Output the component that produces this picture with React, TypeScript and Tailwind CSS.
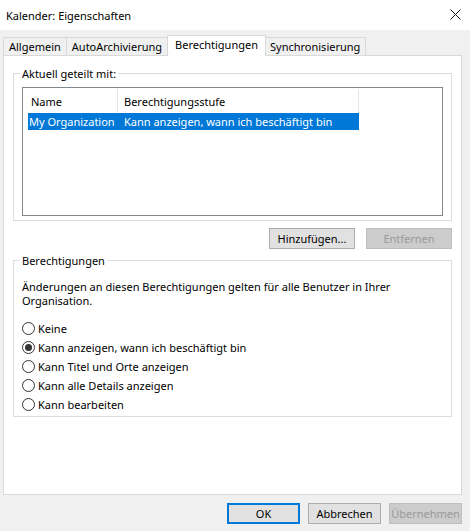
import React from "react";

const font = { fontFamily: '"Noto Sans", "DejaVu Sans", sans-serif' };

function Tab({ label, active, first }: { label: string; active?: boolean; first?: boolean }) {
  if (active) {
    return (
      <div className="relative z-10 -mx-[1px] -mb-px flex h-[21px] items-center self-end border border-b-0 border-[#d9d9d9] bg-white px-[7px]">
        <span className="-mt-[3px]">{label}</span>
      </div>
    );
  }
  return (
    <div
      className={`flex h-[18px] items-center self-end border border-b-0 border-[#d9d9d9] bg-[#f0f0f0] px-[5px] ${
        first ? "" : "border-l-0"
      }`}
    >
      {label}
    </div>
  );
}

function Radio({ label, checked }: { label: string; checked?: boolean }) {
  return (
    <div className="flex h-[19px] items-center">
      <div className="flex h-[13px] w-[13px] items-center justify-center rounded-full border border-[#333333] bg-white">
        {checked && <div className="h-[7px] w-[7px] rounded-full bg-[#333333]" />}
      </div>
      <span className="ml-[3px]">{label}</span>
    </div>
  );
}

function Button({
  label,
  disabled,
  primary,
  className = "",
}: {
  label: string;
  disabled?: boolean;
  primary?: boolean;
  className?: string;
}) {
  const base = "flex items-center justify-center h-[21px]";
  if (disabled) {
    return (
      <div className={`${base} border border-[#bfbfbf] bg-[#cccccc] text-[#9a9a9a] ${className}`}>{label}</div>
    );
  }
  if (primary) {
    return (
      <div className={`${base} border-2 border-[#0078d7] bg-[#e1e1e1] text-black ${className}`}>{label}</div>
    );
  }
  return <div className={`${base} border border-[#adadad] bg-[#e1e1e1] text-black ${className}`}>{label}</div>;
}

export default function App() {
  return (
    <div
      className="flex h-[531px] w-[470px] flex-col bg-[#f0f0f0] text-[11px] leading-[15px] text-black"
      style={font}
    >
      {/* Title bar */}
      <div className="flex h-[30px] shrink-0 items-center justify-between bg-white pl-[6px] pr-[9px]">
        <span className="text-[11px]">Kalender: Eigenschaften</span>
        <svg width="11" height="11" viewBox="0 0 11 11" className="mb-[2px]">
          <path d="M0.5 0.5 L10.5 10.5 M10.5 0.5 L0.5 10.5" stroke="#1a1a1a" strokeWidth="1" fill="none" />
        </svg>
      </div>

      {/* Tabs */}
      <div className="ml-[3px] mt-[7px] flex h-[18px] items-end">
        <Tab label="Allgemein" first />
        <Tab label="AutoArchivierung" />
        <Tab label="Berechtigungen" active />
        <Tab label="Synchronisierung" />
      </div>

      {/* Panel */}
      <div className="ml-[3px] mr-[8px] flex h-[440px] flex-col border border-[#d9d9d9] bg-white px-[9px] pt-[10px]">
        <fieldset className="border border-[#dcdcdc] px-[8px] pb-[4px]">
          <legend className="-ml-[2px] px-[2px]">Aktuell geteilt mit:</legend>
          <div className="mt-[6px] h-[129px] border border-[#828790] bg-white pl-[5px] pt-[1px]">
            <div className="flex h-[24px] w-[331px] items-center">
              <div className="flex h-full w-[90px] items-center border-r border-[#e5e5e5] pl-[3px]">Name</div>
              <div className="flex h-full flex-1 items-center border-r border-[#e5e5e5] pl-[6px]">
                Berechtigungsstufe
              </div>
            </div>
            <div className="flex h-[17px] w-[331px] items-center whitespace-nowrap bg-[#0078d7] text-white">
              <div className="w-[90px] pl-[1px]">My Organization</div>
              <div className="pl-[6px]">Kann anzeigen, wann ich beschäftigt bin</div>
            </div>
          </div>
        </fieldset>

        <div className="mt-[7px] flex justify-end gap-[11px]">
          <Button label="Hinzufügen..." className="w-[86px]" />
          <Button label="Entfernen" disabled className="w-[86px]" />
        </div>

        <fieldset className="mt-[4px] h-[164px] border border-[#dcdcdc] px-[8px]">
          <legend className="-ml-[2px] px-[2px]">Berechtigungen</legend>
          <p className="mt-[12px] pr-[20px] leading-[14px]">
            Änderungen an diesen Berechtigungen gelten für alle Benutzer in Ihrer Organisation.
          </p>
          <div className="mt-[11px] flex flex-col">
            <Radio label="Keine" />
            <Radio label="Kann anzeigen, wann ich beschäftigt bin" checked />
            <Radio label="Kann Titel und Orte anzeigen" />
            <Radio label="Kann alle Details anzeigen" />
            <Radio label="Kann bearbeiten" />
          </div>
        </fieldset>
      </div>

      {/* Bottom buttons */}
      <div className="mt-[8px] flex justify-end gap-[8px] pr-[8px]">
        <Button label="OK" primary className="w-[73px]" />
        <Button label="Abbrechen" className="w-[73px]" />
        <Button label="Übernehmen" disabled className="w-[73px]" />
      </div>
    </div>
  );
}
